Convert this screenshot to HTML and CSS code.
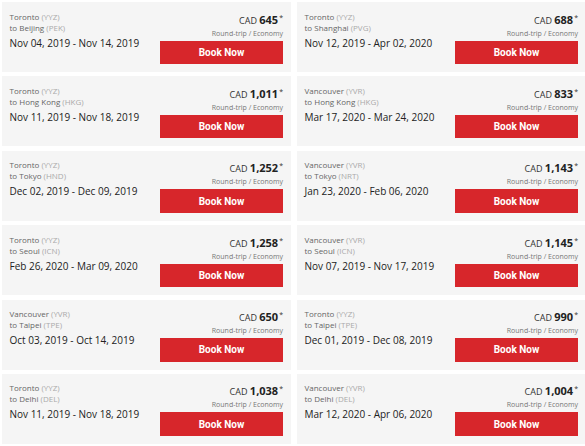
FILE: index.html
```html
<!DOCTYPE html>
<html lang="en">
<head>
<meta charset="utf-8">
<title>Flight Deals</title>
<link rel="stylesheet" href="styles.css">
</head>
<body>
<div class="deals">
  <div class="card">
    <div class="info">
      <div class="route">Toronto <span class="code">(YYZ)</span></div>
      <div class="route">to Beijing <span class="code">(PEK)</span></div>
      <div class="dates">Nov 04, 2019 - Nov 14, 2019</div>
    </div>
    <div class="buy">
      <div class="price"><span class="cur">CAD</span> <span class="amt">645</span><span class="star">*</span></div>
      <div class="fare">Round-trip / Economy</div>
      <a class="btn">Book Now</a>
    </div>
  </div>
  <div class="card">
    <div class="info">
      <div class="route">Toronto <span class="code">(YYZ)</span></div>
      <div class="route">to Shanghai <span class="code">(PVG)</span></div>
      <div class="dates">Nov 12, 2019 - Apr 02, 2020</div>
    </div>
    <div class="buy">
      <div class="price"><span class="cur">CAD</span> <span class="amt">688</span><span class="star">*</span></div>
      <div class="fare">Round-trip / Economy</div>
      <a class="btn">Book Now</a>
    </div>
  </div>
  <div class="card">
    <div class="info">
      <div class="route">Toronto <span class="code">(YYZ)</span></div>
      <div class="route">to Hong Kong <span class="code">(HKG)</span></div>
      <div class="dates">Nov 11, 2019 - Nov 18, 2019</div>
    </div>
    <div class="buy">
      <div class="price"><span class="cur">CAD</span> <span class="amt">1,011</span><span class="star">*</span></div>
      <div class="fare">Round-trip / Economy</div>
      <a class="btn">Book Now</a>
    </div>
  </div>
  <div class="card">
    <div class="info">
      <div class="route">Vancouver <span class="code">(YVR)</span></div>
      <div class="route">to Hong Kong <span class="code">(HKG)</span></div>
      <div class="dates">Mar 17, 2020 - Mar 24, 2020</div>
    </div>
    <div class="buy">
      <div class="price"><span class="cur">CAD</span> <span class="amt">833</span><span class="star">*</span></div>
      <div class="fare">Round-trip / Economy</div>
      <a class="btn">Book Now</a>
    </div>
  </div>
  <div class="card">
    <div class="info">
      <div class="route">Toronto <span class="code">(YYZ)</span></div>
      <div class="route">to Tokyo <span class="code">(HND)</span></div>
      <div class="dates">Dec 02, 2019 - Dec 09, 2019</div>
    </div>
    <div class="buy">
      <div class="price"><span class="cur">CAD</span> <span class="amt">1,252</span><span class="star">*</span></div>
      <div class="fare">Round-trip / Economy</div>
      <a class="btn">Book Now</a>
    </div>
  </div>
  <div class="card">
    <div class="info">
      <div class="route">Vancouver <span class="code">(YVR)</span></div>
      <div class="route">to Tokyo <span class="code">(NRT)</span></div>
      <div class="dates">Jan 23, 2020 - Feb 06, 2020</div>
    </div>
    <div class="buy">
      <div class="price"><span class="cur">CAD</span> <span class="amt">1,143</span><span class="star">*</span></div>
      <div class="fare">Round-trip / Economy</div>
      <a class="btn">Book Now</a>
    </div>
  </div>
  <div class="card">
    <div class="info">
      <div class="route">Toronto <span class="code">(YYZ)</span></div>
      <div class="route">to Seoul <span class="code">(ICN)</span></div>
      <div class="dates">Feb 26, 2020 - Mar 09, 2020</div>
    </div>
    <div class="buy">
      <div class="price"><span class="cur">CAD</span> <span class="amt">1,258</span><span class="star">*</span></div>
      <div class="fare">Round-trip / Economy</div>
      <a class="btn">Book Now</a>
    </div>
  </div>
  <div class="card">
    <div class="info">
      <div class="route">Vancouver <span class="code">(YVR)</span></div>
      <div class="route">to Seoul <span class="code">(ICN)</span></div>
      <div class="dates">Nov 07, 2019 - Nov 17, 2019</div>
    </div>
    <div class="buy">
      <div class="price"><span class="cur">CAD</span> <span class="amt">1,145</span><span class="star">*</span></div>
      <div class="fare">Round-trip / Economy</div>
      <a class="btn">Book Now</a>
    </div>
  </div>
  <div class="card">
    <div class="info">
      <div class="route">Vancouver <span class="code">(YVR)</span></div>
      <div class="route">to Taipei <span class="code">(TPE)</span></div>
      <div class="dates">Oct 03, 2019 - Oct 14, 2019</div>
    </div>
    <div class="buy">
      <div class="price"><span class="cur">CAD</span> <span class="amt">650</span><span class="star">*</span></div>
      <div class="fare">Round-trip / Economy</div>
      <a class="btn">Book Now</a>
    </div>
  </div>
  <div class="card">
    <div class="info">
      <div class="route">Toronto <span class="code">(YYZ)</span></div>
      <div class="route">to Taipei <span class="code">(TPE)</span></div>
      <div class="dates">Dec 01, 2019 - Dec 08, 2019</div>
    </div>
    <div class="buy">
      <div class="price"><span class="cur">CAD</span> <span class="amt">990</span><span class="star">*</span></div>
      <div class="fare">Round-trip / Economy</div>
      <a class="btn">Book Now</a>
    </div>
  </div>
  <div class="card">
    <div class="info">
      <div class="route">Toronto <span class="code">(YYZ)</span></div>
      <div class="route">to Delhi <span class="code">(DEL)</span></div>
      <div class="dates">Nov 11, 2019 - Nov 18, 2019</div>
    </div>
    <div class="buy">
      <div class="price"><span class="cur">CAD</span> <span class="amt">1,038</span><span class="star">*</span></div>
      <div class="fare">Round-trip / Economy</div>
      <a class="btn">Book Now</a>
    </div>
  </div>
  <div class="card">
    <div class="info">
      <div class="route">Vancouver <span class="code">(YVR)</span></div>
      <div class="route">to Delhi <span class="code">(DEL)</span></div>
      <div class="dates">Mar 12, 2020 - Apr 06, 2020</div>
    </div>
    <div class="buy">
      <div class="price"><span class="cur">CAD</span> <span class="amt">1,004</span><span class="star">*</span></div>
      <div class="fare">Round-trip / Economy</div>
      <a class="btn">Book Now</a>
    </div>
  </div>
</div>
</body>
</html>
```
FILE: styles.css
```css
html, body {
  margin: 0;
  padding: 0;
  background: #ffffff;
  font-family: "Open Sans", "Liberation Sans", sans-serif;
  color: #333;
}

.deals {
  display: grid;
  grid-template-columns: 289px 289px;
  column-gap: 6px;
  row-gap: 4.4px;
  padding: 2px;
}

.card {
  height: 70px;
  box-sizing: border-box;
  background: #f5f5f5;
  display: flex;
  justify-content: space-between;
  align-items: flex-start;
  padding: 8.5px 8px 0 7.5px;
}

.info {
  display: flex;
  flex-direction: column;
}

.route {
  font-size: 8px;
  line-height: 11px;
  color: #666;
  white-space: nowrap;
}

.code {
  color: #aaa;
}

.dates {
  margin-top: 3px;
  font-size: 10px;
  line-height: 14px;
  color: #222;
  white-space: nowrap;
}

.buy {
  width: 123px;
  display: flex;
  flex-direction: column;
  align-items: flex-end;
  padding-top: 3px;
}

.price {
  font-size: 9px;
  line-height: 12px;
  color: #333;
  white-space: nowrap;
}

.cur {
  font-size: 9px;
}

.amt {
  font-size: 11px;
  font-weight: 700;
  color: #222;
}

.star {
  font-size: 7px;
  vertical-align: 4px;
  line-height: 0;
  margin-left: 1px;
}

.fare {
  margin-top: 2px;
  font-size: 7px;
  line-height: 10px;
  color: #777;
  white-space: nowrap;
}

.btn {
  margin-top: 2px;
  width: 123px;
  height: 23.5px;
  background: #d7262b;
  color: #fff;
  font-family: Roboto, "Liberation Sans", sans-serif;
  font-weight: 700;
  font-size: 10px;
  display: flex;
  align-items: center;
  justify-content: center;
}
```
